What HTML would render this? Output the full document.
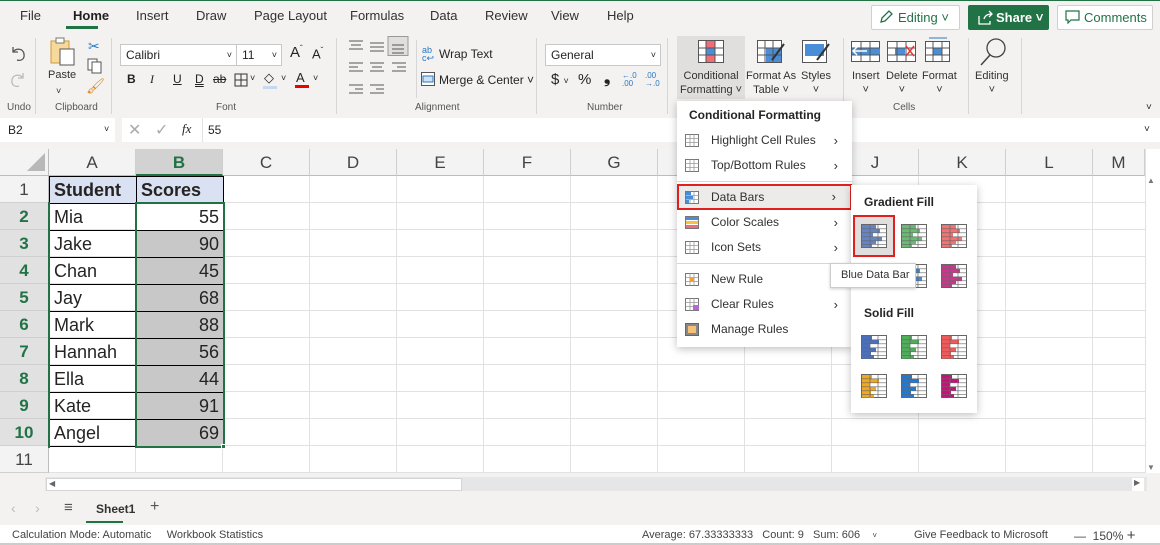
<!DOCTYPE html>
<html><head><meta charset="utf-8"><style>
*{box-sizing:border-box;margin:0;padding:0}
body{width:1160px;height:545px;overflow:hidden;background:#f3f2f1;font-family:"Liberation Sans",sans-serif;color:#252423;position:relative;font-size:12px}
.a{position:absolute}
.tab{position:absolute;top:8px;font-size:13px;color:#323130}
.lbl{position:absolute;top:102px;font-size:10px;color:#555}
.sep{position:absolute;top:38px;width:1px;height:76px;background:#d6d6d6}
.rb{position:absolute;font-size:11px;color:#323130;text-align:center;line-height:14px}
.grid{position:absolute;left:49px;top:176px;width:1096px;height:297px;background:#fff;
background-image:linear-gradient(to right,transparent 86px,#e1e1e1 86px),linear-gradient(to bottom,transparent 26px,#e1e1e1 26px);background-size:87px 27px;}
.ch{position:absolute;top:149px;height:27px;width:87px;border-right:1px solid #cfcfcf;border-bottom:1px solid #bdbdbd;background:#f3f3f3;text-align:center;line-height:27px;font-size:17px;color:#444}
.rh{position:absolute;left:0;width:49px;height:27px;border-bottom:1px solid #cfcfcf;border-right:1px solid #bdbdbd;text-align:center;line-height:27px;font-size:17px;color:#444;background:#f3f3f3}
.rh.s{background:#e1e1e1;color:#217346;font-weight:bold}
.c{position:absolute;height:27px;width:87px;font-size:18px;line-height:27px;padding:0 4px;border:1px solid #000;margin:-1px 0 0 -1px;width:88px;height:28px}
.mi{position:absolute;left:0;width:175px;height:25px;font-size:12px;line-height:25px;padding-left:34px;color:#323130}
.mi .ar{position:absolute;right:14px;top:0;font-size:13px}
.ic{position:absolute;left:8px;top:6px;width:14px;height:13px}
</style></head><body>
<svg width="0" height="0" style="position:absolute"><defs>
<symbol id="gb" viewBox="0 0 26 24"><rect x="0.5" y="0.5" width="25" height="23" fill="#fff" stroke="#666"/>
<g fill="currentColor" opacity=".85"><rect x="1" y="1" width="14" height="3.5"/><rect x="1" y="5" width="18" height="3.5"/><rect x="1" y="9" width="11" height="3.5"/><rect x="1" y="13" width="20" height="3.5"/><rect x="1" y="17" width="14" height="3"/><rect x="1" y="20.5" width="10" height="3"/></g>
<g stroke="#666" stroke-width=".7" fill="none"><path d="M9 1v22M17 1v22M1 4.8h24M1 8.8h24M1 12.8h24M1 16.8h24M1 20.3h24"/></g></symbol>
<symbol id="sb" viewBox="0 0 26 24"><rect x="0.5" y="0.5" width="25" height="23" fill="#fff" stroke="#666"/>
<g fill="currentColor"><rect x="1" y="1" width="10" height="3.5"/><rect x="1" y="5" width="17" height="3.5"/><rect x="1" y="9" width="8" height="3.5"/><rect x="1" y="13" width="14" height="3.5"/><rect x="1" y="17" width="9" height="3"/><rect x="1" y="20.5" width="12" height="3"/></g>
<g stroke="#666" stroke-width=".7" fill="none"><path d="M9 1v22M17 1v22M1 4.8h24M1 8.8h24M1 12.8h24M1 16.8h24M1 20.3h24"/></g></symbol>
<symbol id="mg" viewBox="0 0 14 13"><rect x=".5" y=".5" width="13" height="12" fill="#fff" stroke="#777"/><path d="M5 .5v12M9 .5v12M.5 4.5h13M.5 8.5h13" stroke="#999" stroke-width=".8"/></symbol>
</defs></svg>

<div class="a" style="left:0;top:0;width:1160px;height:1px;background:#217346"></div>
<div class="tab" style="left:20px">File</div>
<div class="tab" style="left:73px;font-weight:bold;color:#201f1e">Home</div>
<div class="a" style="left:66px;top:26px;width:32px;height:3px;background:#217346"></div>
<div class="tab" style="left:136px">Insert</div>
<div class="tab" style="left:196px">Draw</div>
<div class="tab" style="left:254px">Page Layout</div>
<div class="tab" style="left:350px">Formulas</div>
<div class="tab" style="left:430px">Data</div>
<div class="tab" style="left:485px">Review</div>
<div class="tab" style="left:551px">View</div>
<div class="tab" style="left:607px">Help</div>
<div class="a" style="left:871px;top:5px;width:89px;height:25px;background:#fff;border:1px solid #d0d0d0;border-radius:2px;color:#217346;font-size:13px;line-height:23px;padding-left:26px">Editing ˅</div>
<svg class="a" style="left:879px;top:10px" width="14" height="14"><path d="M2 12l1-4 7-7 3 3-7 7z" fill="none" stroke="#217346" stroke-width="1.3"/></svg>
<div class="a" style="left:968px;top:5px;width:81px;height:25px;background:#217346;border-radius:2px;color:#fff;font-size:13px;font-weight:bold;line-height:25px;padding-left:28px">Share ˅</div>
<svg class="a" style="left:977px;top:10px" width="16" height="15"><path d="M2 6v8h11v-3M7 9c1-4 4-5 8-5M12 1l3 3-3 3" fill="none" stroke="#fff" stroke-width="1.3"/></svg>
<div class="a" style="left:1057px;top:5px;width:96px;height:25px;background:#fff;border:1px solid #d0d0d0;border-radius:2px;color:#217346;font-size:13px;line-height:23px;padding-left:26px">Comments</div>
<svg class="a" style="left:1065px;top:10px" width="15" height="14"><path d="M1 1h13v9H6l-3 3v-3H1z" fill="none" stroke="#217346" stroke-width="1.2"/></svg>

<!-- ribbon -->
<svg class="a" style="left:9px;top:44px" width="18" height="18"><path d="M4 3v5h5M4 8c3-4 10-4 11 2s-4 7-7 6" fill="none" stroke="#555" stroke-width="1.3"/></svg>
<svg class="a" style="left:9px;top:70px" width="18" height="18"><path d="M14 3v5H9M14 8C11 4 4 4 3 10s4 7 7 6" fill="none" stroke="#bbb" stroke-width="1.3"/></svg>
<div class="lbl" style="left:7px">Undo</div>
<div class="sep" style="left:35px"></div>
<svg class="a" style="left:48px;top:36px" width="30" height="32"><rect x="3" y="5" width="18" height="22" fill="#f7d99b" stroke="#d19a35"/><rect x="8" y="2" width="8" height="5" fill="#fff" stroke="#777"/><rect x="12" y="13" width="14" height="16" fill="#fff" stroke="#555"/></svg>
<div class="rb" style="left:48px;top:68px">Paste</div>
<div class="rb" style="left:56px;top:84px;font-size:9px">˅</div>
<div class="a" style="left:88px;top:38px;color:#2b79c2;font-size:14px">✂</div>
<svg class="a" style="left:87px;top:58px" width="16" height="16"><rect x="1" y="1" width="9" height="11" fill="#fff" stroke="#555"/><rect x="5" y="4" width="9" height="11" fill="#fff" stroke="#555"/></svg>
<div class="a" style="left:86px;top:77px;color:#e08a1e;font-size:15px">🖌</div>
<div class="lbl" style="left:55px">Clipboard</div>
<div class="sep" style="left:111px"></div>
<div class="a" style="left:120px;top:44px;width:117px;height:22px;background:#fff;border:1px solid #c8c8c8;font-size:12px;line-height:20px;padding-left:5px">Calibri<span style="position:absolute;right:4px;font-size:9px">˅</span></div>
<div class="a" style="left:236px;top:44px;width:46px;height:22px;background:#fff;border:1px solid #c8c8c8;font-size:12px;line-height:20px;padding-left:5px">11<span style="position:absolute;right:4px;font-size:9px">˅</span></div>
<div class="a" style="left:290px;top:44px;font-size:15px">A<sup style="font-size:8px">ˆ</sup></div>
<div class="a" style="left:312px;top:46px;font-size:13px">A<sup style="font-size:8px">ˇ</sup></div>
<div class="a" style="left:127px;top:72px;font-size:12px;font-weight:bold">B</div>
<div class="a" style="left:150px;top:72px;font-size:12px;font-style:italic;font-family:'Liberation Serif',serif">I</div>
<div class="a" style="left:173px;top:72px;font-size:12px;text-decoration:underline">U</div>
<div class="a" style="left:195px;top:72px;font-size:12px;text-decoration:underline double">D</div>
<div class="a" style="left:213px;top:72px;font-size:12px;text-decoration:line-through">ab</div>
<svg class="a" style="left:234px;top:73px" width="14" height="14"><rect x="1" y="1" width="12" height="12" fill="none" stroke="#333"/><path d="M7 1v12M1 7h12" stroke="#333"/></svg>
<div class="a" style="left:250px;top:73px;font-size:9px">˅</div>
<div class="a" style="left:264px;top:70px;font-size:13px">◇</div>
<div class="a" style="left:263px;top:86px;width:14px;height:3px;background:#c8d8ee"></div>
<div class="a" style="left:281px;top:73px;font-size:9px">˅</div>
<div class="a" style="left:296px;top:70px;font-size:13px">A</div>
<div class="a" style="left:295px;top:85px;width:14px;height:3px;background:#e00"></div>
<div class="a" style="left:313px;top:73px;font-size:9px">˅</div>
<div class="lbl" style="left:216px">Font</div>
<div class="sep" style="left:336px"></div>
<svg class="a" style="left:344px;top:36px" width="72" height="62" stroke="#555" stroke-width="1">
<path d="M5 5h14M7 9h10M5 13h14M26 7h14M26 11h14M26 15h14"/>
<rect x="44" y="0.5" width="20" height="19" fill="#e1dfdd" stroke="#999"/><path d="M48 9h12M48 13h12M48 17h12"/>
<path d="M5 27h14M5 31h9M5 35h14M26 27h14M28 31h10M26 35h14M48 27h14M53 31h9M48 35h14"/>
<path d="M5 49h14M11 53h8M5 57h14M26 49h14M32 53h8M26 57h14"/>
</svg>
<div class="sep" style="left:416px;top:40px;height:58px"></div>
<div class="a" style="left:422px;top:46px;font-size:9px;color:#2b79c2;line-height:8px">ab<br>c↩</div>
<div class="a" style="left:439px;top:47px;font-size:12px">Wrap Text</div>
<svg class="a" style="left:421px;top:72px" width="14" height="14"><rect x=".5" y=".5" width="13" height="13" fill="#fff" stroke="#555"/><rect x="2" y="4" width="10" height="6" fill="#cfe1f5" stroke="#2b79c2"/></svg>
<div class="a" style="left:439px;top:73px;font-size:12px">Merge &amp; Center ˅</div>
<div class="lbl" style="left:415px">Alignment</div>
<div class="sep" style="left:536px"></div>
<div class="a" style="left:545px;top:44px;width:116px;height:22px;background:#fff;border:1px solid #c8c8c8;font-size:12px;line-height:20px;padding-left:5px">General<span style="position:absolute;right:4px;font-size:9px">˅</span></div>
<div class="a" style="left:551px;top:71px;font-size:15px">$ <span style="font-size:9px">˅</span></div>
<div class="a" style="left:578px;top:71px;font-size:15px">%</div>
<div class="a" style="left:604px;top:70px;font-size:16px;font-weight:bold">❟</div>
<div class="a" style="left:622px;top:72px;font-size:8px;color:#2b79c2;line-height:8px">←.0<br>.00</div>
<div class="a" style="left:645px;top:72px;font-size:8px;color:#2b79c2;line-height:8px">.00<br>→.0</div>
<div class="lbl" style="left:587px">Number</div>
<div class="sep" style="left:667px"></div>
<div class="a" style="left:677px;top:36px;width:68px;height:63px;background:#e1dfdd"></div>
<svg class="a" style="left:698px;top:40px" width="26" height="24"><rect x=".5" y=".5" width="25" height="22" fill="#fff" stroke="#555"/><rect x="8" y="1" width="9" height="7" fill="#f36b73"/><rect x="8" y="15" width="9" height="7" fill="#f36b73"/><rect x="8" y="8" width="9" height="7" fill="#4a8ed8"/><path d="M8 1v22M17 1v22M1 8h25M1 15h25" stroke="#555"/></svg>
<div class="rb" style="left:680px;top:69px">Conditional<br>Formatting ˅</div>
<svg class="a" style="left:757px;top:40px" width="28" height="26"><rect x=".5" y=".5" width="24" height="22" fill="#fff" stroke="#555"/><rect x="9" y="8" width="15" height="14" fill="#4a8ed8"/><path d="M8 1v22M16 1v22M1 8h24M1 15h24" stroke="#555"/><path d="M27 4l-12 16" stroke="#333" stroke-width="2"/></svg>
<div class="rb" style="left:746px;top:69px">Format As<br>Table ˅</div>
<svg class="a" style="left:802px;top:40px" width="28" height="26"><rect x=".5" y=".5" width="24" height="22" fill="#fff" stroke="#555"/><rect x="3" y="4" width="19" height="12" fill="#4a8ed8"/><path d="M27 4l-12 16" stroke="#333" stroke-width="2"/></svg>
<div class="rb" style="left:801px;top:69px">Styles<br>˅</div>
<div class="sep" style="left:843px"></div>
<svg class="a" style="left:851px;top:41px" width="30" height="22"><rect x=".5" y=".5" width="28" height="20" fill="#fff" stroke="#555"/><rect x="1" y="7" width="28" height="7" fill="#4a8ed8"/><path d="M10 1v20M19 1v20M1 7h28M1 14h28" stroke="#555"/><path d="M16 10H2M6 6l-4 4 4 4" stroke="#fff" stroke-width="1.4" fill="none"/></svg>
<svg class="a" style="left:887px;top:41px" width="30" height="22"><rect x=".5" y=".5" width="28" height="20" fill="#fff" stroke="#555"/><rect x="8" y="7" width="10" height="7" fill="#4a8ed8"/><path d="M10 1v20M19 1v20M1 7h28M1 14h28" stroke="#555"/><path d="M19 5l8 10M27 5l-8 10" stroke="#e33" stroke-width="1.5"/></svg>
<svg class="a" style="left:925px;top:37px" width="26" height="26"><path d="M4 1h18" stroke="#2b79c2"/><rect x=".5" y="4.5" width="24" height="20" fill="#fff" stroke="#555"/><rect x="8" y="11" width="9" height="7" fill="#4a8ed8"/><path d="M8 5v20M17 5v20M1 11h24M1 18h24" stroke="#555"/></svg>
<div class="rb" style="left:852px;top:69px">Insert<br>˅</div>
<div class="rb" style="left:886px;top:69px">Delete<br>˅</div>
<div class="rb" style="left:922px;top:69px">Format<br>˅</div>
<div class="lbl" style="left:893px">Cells</div>
<div class="sep" style="left:968px"></div>
<svg class="a" style="left:978px;top:37px" width="30" height="30"><circle cx="18" cy="11" r="9" fill="none" stroke="#444" stroke-width="1.3"/><path d="M12 18L3 28" stroke="#444" stroke-width="1.5"/></svg>
<div class="rb" style="left:975px;top:69px">Editing<br>˅</div>
<div class="sep" style="left:1021px"></div>
<div class="a" style="left:1146px;top:102px;font-size:10px">˅</div>

<!-- formula bar -->
<div class="a" style="left:0;top:118px;width:1160px;height:24px;background:#fff"></div>
<div class="a" style="left:115px;top:118px;width:7px;height:24px;background:#f3f2f1"></div>
<div class="a" style="left:8px;top:123px;font-size:12px">B2</div>
<div class="a" style="left:104px;top:124px;font-size:9px">˅</div>
<div class="a" style="left:128px;top:120px;font-size:16px;color:#aaa">✕</div>
<div class="a" style="left:155px;top:120px;font-size:16px;color:#aaa">✓</div>
<div class="a" style="left:182px;top:121px;font-size:13px;font-style:italic;font-family:'Liberation Serif',serif">fx</div>
<div class="a" style="left:202px;top:118px;width:1px;height:24px;background:#e1e1e1"></div>
<div class="a" style="left:208px;top:123px;font-size:12px">55</div>
<div class="a" style="left:1144px;top:124px;font-size:10px">˅</div>

<!-- grid -->
<div class="a" style="left:0;top:149px;width:49px;height:27px;background:#f3f3f3;border-right:1px solid #bdbdbd;border-bottom:1px solid #bdbdbd"></div>
<svg class="a" style="left:26px;top:152px" width="20" height="20"><path d="M19 1v18H1z" fill="#b8b8b8"/></svg>
<div class="ch" style="left:49px">A</div>
<div class="ch" style="left:136px;background:#d2d2d2;color:#217346;font-weight:bold;border-bottom:2px solid #217346">B</div>
<div class="ch" style="left:223px">C</div><div class="ch" style="left:310px">D</div><div class="ch" style="left:397px">E</div><div class="ch" style="left:484px">F</div><div class="ch" style="left:571px">G</div><div class="ch" style="left:658px">H</div><div class="ch" style="left:745px">I</div><div class="ch" style="left:832px">J</div><div class="ch" style="left:919px">K</div><div class="ch" style="left:1006px">L</div><div class="ch" style="left:1093px;width:52px;overflow:hidden">M</div>
<div class="grid"></div>
<div class="rh" style="top:176px">1</div>
<div class="rh s" style="top:203px">2</div><div class="rh s" style="top:230px">3</div><div class="rh s" style="top:257px">4</div><div class="rh s" style="top:284px">5</div><div class="rh s" style="top:311px">6</div><div class="rh s" style="top:338px">7</div><div class="rh s" style="top:365px">8</div><div class="rh s" style="top:392px">9</div><div class="rh s" style="top:419px">10</div>
<div class="rh" style="top:446px">11</div>

<div class="c" style="left:50px;top:177px;background:#d9e1f2;font-weight:bold">Student</div>
<div class="c" style="left:137px;top:177px;background:#d9e1f2;font-weight:bold">Scores</div>
<div class="c" style="left:50px;top:204px">Mia</div><div class="c" style="left:137px;top:204px;text-align:right;background:#fff">55</div>
<div class="c" style="left:50px;top:231px">Jake</div><div class="c" style="left:137px;top:231px;text-align:right;background:#c8c8c8">90</div>
<div class="c" style="left:50px;top:258px">Chan</div><div class="c" style="left:137px;top:258px;text-align:right;background:#c8c8c8">45</div>
<div class="c" style="left:50px;top:285px">Jay</div><div class="c" style="left:137px;top:285px;text-align:right;background:#c8c8c8">68</div>
<div class="c" style="left:50px;top:312px">Mark</div><div class="c" style="left:137px;top:312px;text-align:right;background:#c8c8c8">88</div>
<div class="c" style="left:50px;top:339px">Hannah</div><div class="c" style="left:137px;top:339px;text-align:right;background:#c8c8c8">56</div>
<div class="c" style="left:50px;top:366px">Ella</div><div class="c" style="left:137px;top:366px;text-align:right;background:#c8c8c8">44</div>
<div class="c" style="left:50px;top:393px">Kate</div><div class="c" style="left:137px;top:393px;text-align:right;background:#c8c8c8">91</div>
<div class="c" style="left:50px;top:420px">Angel</div><div class="c" style="left:137px;top:420px;text-align:right;background:#c8c8c8">69</div>
<div class="a" style="left:135px;top:202px;width:90px;height:246px;border:2px solid #217346"></div>
<div class="a" style="left:48px;top:202px;width:2px;height:246px;background:#217346"></div>
<div class="a" style="left:221px;top:444px;width:5px;height:5px;background:#217346;border:1px solid #fff"></div>

<!-- scrollbars -->
<div class="a" style="left:1145px;top:149px;width:15px;height:324px;background:#fff;border-left:1px solid #e1e1e1"></div>
<div class="a" style="left:1147px;top:176px;font-size:8px;color:#777">▲</div>
<div class="a" style="left:1147px;top:463px;font-size:8px;color:#777">▼</div>
<div class="a" style="left:0;top:473px;width:1160px;height:20px;background:#f3f2f1"></div>
<div class="a" style="left:45px;top:477px;width:1102px;height:14px;background:#e6e6e6"></div>
<div class="a" style="left:46px;top:478px;width:416px;height:13px;background:#fff;border:1px solid #d4d4d4"></div>
<div class="a" style="left:49px;top:479px;font-size:8px;color:#666">◀</div>
<div class="a" style="left:1132px;top:478px;width:12px;height:13px;background:#fff;font-size:8px;color:#666;padding-left:2px">▶</div>
<!-- sheet tabs -->
<div class="a" style="left:11px;top:500px;font-size:14px;color:#bbb">‹ &nbsp;&nbsp;&nbsp; ›</div>
<div class="a" style="left:64px;top:499px;font-size:15px;color:#555">≡</div>
<div class="a" style="left:96px;top:502px;font-size:12px;font-weight:bold;color:#333">Sheet1</div>
<div class="a" style="left:86px;top:521px;width:37px;height:2px;background:#217346"></div>
<div class="a" style="left:150px;top:498px;font-size:16px;color:#555">+</div>
<!-- status -->
<div class="a" style="left:0;top:525px;width:1160px;height:20px;background:#fff;border-bottom:2px solid #ccc"></div>
<div class="a" style="left:12px;top:529px;font-size:11px;color:#444">Calculation Mode: Automatic &nbsp;&nbsp;&nbsp; Workbook Statistics</div>
<div class="a" style="left:642px;top:529px;font-size:11px;color:#444">Average: 67.33333333 &nbsp;&nbsp;Count: 9 &nbsp;&nbsp;Sum: 606 &nbsp;&nbsp;&nbsp;<span style="font-size:8px">˅</span></div>
<div class="a" style="left:914px;top:529px;font-size:11px;color:#444">Give Feedback to Microsoft</div>
<div class="a" style="left:1074px;top:527px;font-size:12px;color:#444">— &nbsp;150% <span style="font-size:15px">+</span></div>

<!-- menu -->
<div class="a" style="left:677px;top:101px;width:175px;height:246px;background:#fff;box-shadow:0 2px 8px rgba(0,0,0,.25)">
<div class="a" style="left:12px;top:7px;font-size:12px;font-weight:bold">Conditional Formatting</div>
<div class="mi" style="top:27px"><svg class="ic"><use href="#mg"/></svg>Highlight Cell Rules<span class="ar">›</span></div>
<div class="mi" style="top:52px"><svg class="ic"><use href="#mg"/></svg>Top/Bottom Rules<span class="ar">›</span></div>
<div class="a" style="left:0;top:80px;width:175px;height:1px;background:#d6d6d6"></div>
<div class="mi" style="top:83px;background:#edebe9;border:2px solid #e0201e;height:26px;line-height:22px;padding-left:32px"><svg class="ic" style="top:5px;left:6px" viewBox="0 0 14 13"><use href="#mg"/><rect x="1" y="1" width="5" height="3" fill="#4a8ed8"/><rect x="1" y="5" width="7" height="3" fill="#4a8ed8"/><rect x="1" y="9" width="3" height="3" fill="#4a8ed8"/></svg>Data Bars<span class="ar">›</span></div>
<div class="mi" style="top:109px"><svg class="ic" viewBox="0 0 14 13"><rect x=".5" y=".5" width="13" height="12" fill="#fff" stroke="#777"/><rect x="1" y="1" width="12" height="3" fill="#4a8ed8"/><rect x="1" y="5" width="12" height="3" fill="#f7c244"/><rect x="1" y="9" width="12" height="3" fill="#f36b73"/></svg>Color Scales<span class="ar">›</span></div>
<div class="mi" style="top:134px"><svg class="ic"><use href="#mg"/></svg>Icon Sets<span class="ar">›</span></div>
<div class="a" style="left:0;top:162px;width:175px;height:1px;background:#d6d6d6"></div>
<div class="mi" style="top:166px"><svg class="ic" viewBox="0 0 14 13"><use href="#mg"/><rect x="5" y="5" width="4" height="3" fill="#f0a030"/></svg>New Rule</div>
<div class="mi" style="top:191px"><svg class="ic" viewBox="0 0 14 13"><use href="#mg"/><rect x="8" y="7" width="6" height="5" fill="#b36ad8"/></svg>Clear Rules<span class="ar">›</span></div>
<div class="mi" style="top:216px"><svg class="ic" viewBox="0 0 14 13"><rect x=".5" y=".5" width="13" height="12" fill="#888" stroke="#666"/><rect x="3" y="3" width="8" height="7" fill="#f7c07a"/></svg>Manage Rules</div>
</div>
<!-- submenu -->
<div class="a" style="left:851px;top:185px;width:126px;height:228px;background:#fff;box-shadow:0 2px 8px rgba(0,0,0,.25)">
<div class="a" style="left:13px;top:10px;font-size:12px;font-weight:bold">Gradient Fill</div>
<div class="a" style="left:2px;top:30px;width:42px;height:42px;border:2px solid #e0201e;background:#e1dfdd"></div>
<svg class="a" style="left:10px;top:39px;color:#4a6fbd" width="26" height="24"><use href="#gb"/></svg>
<svg class="a" style="left:50px;top:39px;color:#4fae5b" width="26" height="24"><use href="#gb"/></svg>
<svg class="a" style="left:90px;top:39px;color:#f15a5a" width="26" height="24"><use href="#gb"/></svg>
<svg class="a" style="left:10px;top:79px;color:#f0a820" width="26" height="24"><use href="#gb"/></svg>
<svg class="a" style="left:50px;top:79px;color:#1e7ad8" width="26" height="24"><use href="#gb"/></svg>
<svg class="a" style="left:90px;top:79px;color:#c8107a" width="26" height="24"><use href="#gb"/></svg>
<div class="a" style="left:13px;top:121px;font-size:12px;font-weight:bold">Solid Fill</div>
<svg class="a" style="left:10px;top:150px;color:#4a6fbd" width="26" height="24"><use href="#sb"/></svg>
<svg class="a" style="left:50px;top:150px;color:#4fae5b" width="26" height="24"><use href="#sb"/></svg>
<svg class="a" style="left:90px;top:150px;color:#f15a5a" width="26" height="24"><use href="#sb"/></svg>
<svg class="a" style="left:10px;top:189px;color:#f0a820" width="26" height="24"><use href="#sb"/></svg>
<svg class="a" style="left:50px;top:189px;color:#1e7ad8" width="26" height="24"><use href="#sb"/></svg>
<svg class="a" style="left:90px;top:189px;color:#c8107a" width="26" height="24"><use href="#sb"/></svg>
</div>
<div class="a" style="left:830px;top:263px;width:86px;height:25px;background:#fff;border:1px solid #ccc;box-shadow:0 1px 3px rgba(0,0,0,.2);font-size:11px;line-height:23px;padding-left:10px;color:#333">Blue Data Bar</div>
</body></html>
